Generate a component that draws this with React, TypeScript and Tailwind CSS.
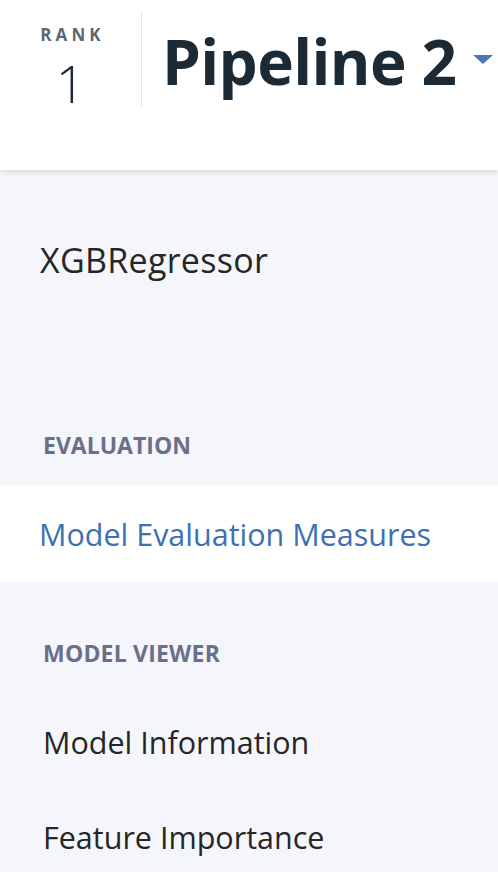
export default function App() {
  return (
    <div
      className="w-[498px] h-[872px] overflow-hidden bg-[#f4f6fb]"
      style={{ fontFamily: '"Open Sans", "Noto Sans", sans-serif' }}
    >
      {/* Header */}
      <div className="relative z-10 h-[170px] bg-white shadow-[0_2px_6px_rgba(0,0,0,0.12)] flex items-start pt-[12px]">
        <div className="w-[141px] flex flex-col items-center pt-[13px]">
          <span className="text-[17px] leading-[20px] font-bold tracking-[0.24em] text-[#5a6872] pl-[4px]">
            RANK
          </span>
          <span className="text-[52px] leading-[52px] font-light text-[#1d2b36] mt-[12px]">1</span>
        </div>
        <div className="w-px h-[95px] bg-[#dfe3e6]" />
        <div className="flex items-center pl-[20px] h-[95px] pt-[2px]">
          <span className="text-[62px] leading-[70px] font-bold text-[#1c2a36] tracking-[-0.01em]">
            Pipeline 2
          </span>
          <svg width="20" height="9" viewBox="0 0 20 9" className="ml-[17px] mt-[-2px]">
            <polygon points="0,0 20,0 10,9" fill="#4a76b8" />
          </svg>
        </div>
      </div>

      {/* Sidebar */}
      <div className="pt-[68px]">
        <div className="px-[40px] text-[34px] leading-[44px] tracking-[0.3px] text-[#262626]">XGBRegressor</div>

        <div className="mt-[151px] px-[43px] text-[23px] leading-[24px] font-bold text-[#6b7089]">
          EVALUATION
        </div>

        <div className="mt-[29px] h-[96px] bg-white flex items-center px-[39px]">
          <span className="text-[30.5px] leading-[40px] text-[#3d70b2]">Model Evaluation Measures</span>
        </div>

        <div className="mt-[59px] px-[43px] text-[23px] leading-[24px] font-bold text-[#6b7089] tracking-[0.2px]">
          MODEL VIEWER
        </div>

        <div className="mt-[57px] px-[43px] text-[30.5px] leading-[40px] text-[#262626]">Model Information</div>
        <div className="mt-[55px] px-[43px] text-[30.5px] leading-[40px] text-[#262626]">Feature Importance</div>
      </div>
    </div>
  );
}
